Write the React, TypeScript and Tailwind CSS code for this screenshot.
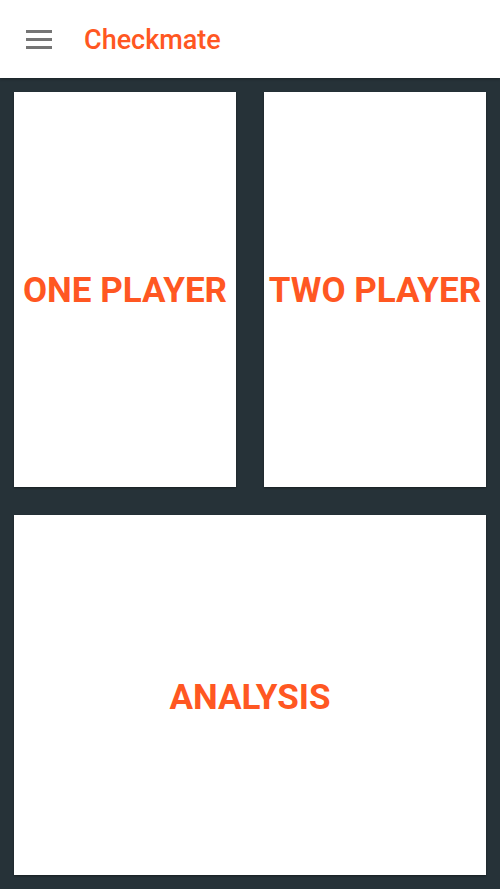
import React from "react";

export default function App() {
  const font = { fontFamily: "Roboto, 'Liberation Sans', sans-serif" };
  return (
    <div className="w-[500px] h-[889px] flex flex-col bg-[#263238]" style={font}>
      <header className="h-[78px] bg-white flex items-center shrink-0 shadow-[0_1px_3px_rgba(0,0,0,0.3)] relative z-10">
        <div className="w-[26px] ml-[26px] flex flex-col gap-[5px]">
          <div className="h-[3px] bg-[#757575]" />
          <div className="h-[3px] bg-[#757575]" />
          <div className="h-[3px] bg-[#757575]" />
        </div>
        <div className="ml-[32px] text-[27px] leading-none font-medium text-[#ff5722] pt-[2px]">Checkmate</div>
      </header>
      <main className="flex-1 flex flex-col gap-[28px] p-[14px]">
        <div className="flex gap-[28px] h-[395px]">
          <div className="flex-1 bg-white flex items-center justify-center shadow-[0_1px_2px_rgba(0,0,0,0.4)]">
            <span className="text-[35px] leading-none font-bold text-[#ff5722] whitespace-nowrap pt-[2px]">ONE PLAYER</span>
          </div>
          <div className="flex-1 bg-white flex items-center justify-center shadow-[0_1px_2px_rgba(0,0,0,0.4)]">
            <span className="text-[35px] leading-none font-bold text-[#ff5722] whitespace-nowrap pt-[2px]">TWO PLAYER</span>
          </div>
        </div>
        <div className="flex-1 bg-white flex items-center justify-center shadow-[0_1px_2px_rgba(0,0,0,0.4)]">
          <span className="text-[35px] leading-none font-bold text-[#ff5722] pt-[4px]">ANALYSIS</span>
        </div>
      </main>
    </div>
  );
}
